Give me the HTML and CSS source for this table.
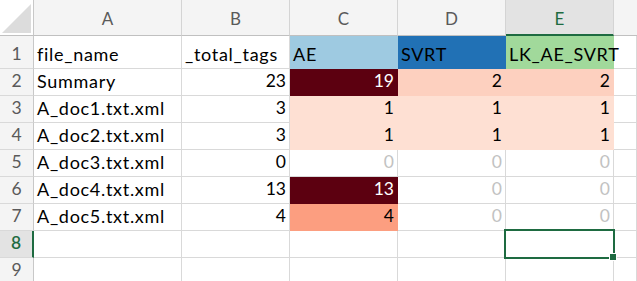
FILE: index.html
```html
<!DOCTYPE html>
<html>
<head>
<meta charset="utf-8">
<link rel="stylesheet" href="styles.css">
</head>
<body>
<div class="sheet">
  <div class="cell corner"><div class="tri"></div></div>
  <div class="cell ch">A</div>
  <div class="cell ch">B</div>
  <div class="cell ch">C</div>
  <div class="cell ch">D</div>
  <div class="cell ch ch-active">E</div>
  <div class="cell ch ch-last"></div>

  <div class="cell rh">1</div>
  <div class="cell txt">file_name</div>
  <div class="cell txt">_total_tags</div>
  <div class="cell txt f-lblue">AE</div>
  <div class="cell txt f-blue">SVRT</div>
  <div class="cell txt f-green">LK_AE_SVRT</div>
  <div class="cell"></div>

  <div class="cell rh">2</div>
  <div class="cell txt">Summary</div>
  <div class="cell num">23</div>
  <div class="cell num f-dark">19</div>
  <div class="cell num f-pink">2</div>
  <div class="cell num f-pink">2</div>
  <div class="cell"></div>

  <div class="cell rh">3</div>
  <div class="cell txt">A_doc1.txt.xml</div>
  <div class="cell num">3</div>
  <div class="cell num f-light">1</div>
  <div class="cell num f-light">1</div>
  <div class="cell num f-light">1</div>
  <div class="cell"></div>

  <div class="cell rh">4</div>
  <div class="cell txt">A_doc2.txt.xml</div>
  <div class="cell num">3</div>
  <div class="cell num f-light">1</div>
  <div class="cell num f-light">1</div>
  <div class="cell num f-light">1</div>
  <div class="cell"></div>

  <div class="cell rh">5</div>
  <div class="cell txt">A_doc3.txt.xml</div>
  <div class="cell num">0</div>
  <div class="cell num zero">0</div>
  <div class="cell num zero">0</div>
  <div class="cell num zero">0</div>
  <div class="cell"></div>

  <div class="cell rh">6</div>
  <div class="cell txt">A_doc4.txt.xml</div>
  <div class="cell num">13</div>
  <div class="cell num f-dark">13</div>
  <div class="cell num zero">0</div>
  <div class="cell num zero">0</div>
  <div class="cell"></div>

  <div class="cell rh">7</div>
  <div class="cell txt">A_doc5.txt.xml</div>
  <div class="cell num">4</div>
  <div class="cell num f-salmon">4</div>
  <div class="cell num zero">0</div>
  <div class="cell num zero">0</div>
  <div class="cell"></div>

  <div class="cell rh rh-active">8</div>
  <div class="cell"></div>
  <div class="cell"></div>
  <div class="cell"></div>
  <div class="cell"></div>
  <div class="cell selected"></div>
  <div class="cell"></div>

  <div class="cell rh">9</div>
  <div class="cell"></div>
  <div class="cell"></div>
  <div class="cell"></div>
  <div class="cell"></div>
  <div class="cell"></div>
  <div class="cell"></div>
</div>
</body>
</html>
```

FILE: styles.css
```css
html, body {
  margin: 0;
  padding: 0;
  background: #ffffff;
  overflow: hidden;
}

.sheet {
  display: grid;
  grid-template-columns: 34px 148px 108px 108px 108px 108px 1fr;
  grid-template-rows: 36px 33px repeat(8, 27px);
  width: 637px;
  font-family: Lato, "Open Sans", sans-serif;
  font-size: 17px;
  color: #000;
}

.cell {
  box-sizing: border-box;
  border-right: 1px solid #d9d9d9;
  border-bottom: 1px solid #d9d9d9;
  display: flex;
  align-items: flex-end;
  padding: 0 3px 4px 3px;
  white-space: nowrap;
  line-height: 20px;
  min-width: 0;
}

.txt {
  justify-content: flex-start;
  font-size: 18px;
  letter-spacing: 0.7px;
}

.num {
  justify-content: flex-end;
  font-size: 17.5px;
}

.zero {
  color: #c2c2c2;
}

.corner {
  background: #ffffff;
  border-right: 1px solid #c8c8c8;
  border-bottom: 1px solid #c0c0c0;
  padding: 0 2px 2px 0;
  justify-content: flex-end;
}

.tri {
  width: 29px;
  height: 29px;
  background: #dcdcdc;
  clip-path: polygon(100% 0, 100% 100%, 0 100%);
}

.ch {
  background: #f4f4f4;
  border-right: 1px solid #d4d4d4;
  border-bottom: 1px solid #c0c0c0;
  justify-content: center;
  align-items: center;
  padding: 2px 0 0 0;
  font-size: 17px;
  color: #5a5a5a;
}

.ch-last {
  border-right: none;
}

.ch-active {
  background: #e3e3e3;
  color: #1e6b41;
  border-bottom: 2px solid #1e6b41;
  padding-top: 3px;
}

.rh {
  background: #f4f4f4;
  border-right: 1px solid #c8c8c8;
  border-bottom: 1px solid #d9d9d9;
  justify-content: center;
  padding: 0 0 4px 0;
  font-size: 17.5px;
  color: #5a5a5a;
}

.rh-active {
  background: #e3e3e3;
  color: #1e6b41;
  border-right: 2px solid #1e6b41;
  font-weight: 600;
}

.f-lblue {
  background: #9ecae1;
  border-color: #9ecae1;
}

.f-blue {
  background: #2171b5;
  border-color: #2171b5;
}

.f-green {
  background: #a1d99b;
  border-color: #a1d99b;
}

.f-dark {
  background: #5c0010;
  border-color: #5c0010;
  color: #ffffff;
}

.f-pink {
  background: #fdd0bf;
  border-color: #fdd0bf;
}

.f-light {
  background: #fee0d3;
  border-color: #fee0d3;
}

.f-salmon {
  background: #fc9e80;
  border-color: #fc9e80;
}

.selected {
  position: relative;
}

.selected::after {
  content: "";
  position: absolute;
  left: -2px;
  top: -2px;
  right: -2px;
  bottom: -2px;
  border: 2px solid #1e6b41;
}

.selected::before {
  content: "";
  position: absolute;
  right: -4px;
  bottom: -4px;
  width: 6px;
  height: 6px;
  background: #1e6b41;
  border: 1px solid #ffffff;
  z-index: 2;
}
```
